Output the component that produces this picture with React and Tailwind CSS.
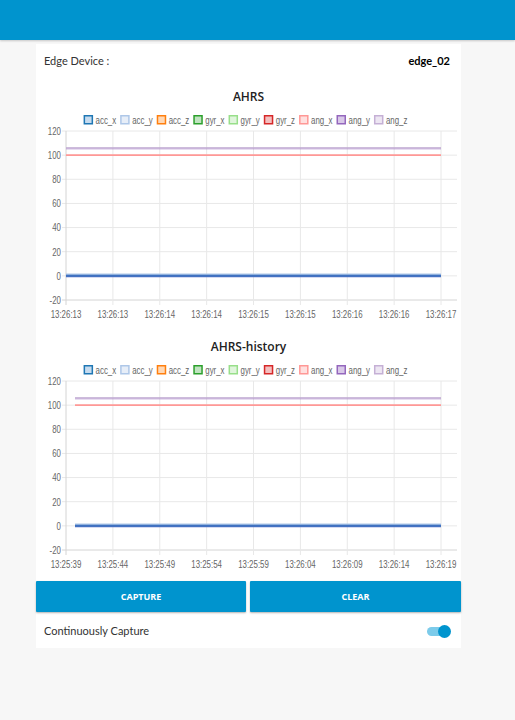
import React from "react";

const LEGEND = [
  ["acc_x", "#1f77b4", "#c6dbef"],
  ["acc_y", "#aec7e8", "#e7eef8"],
  ["acc_z", "#ff7f0e", "#ffd8b5"],
  ["gyr_x", "#2ca02c", "#c0e3c0"],
  ["gyr_y", "#98df8a", "#e0f5dc"],
  ["gyr_z", "#d62728", "#f3bfbf"],
  ["ang_x", "#ff9896", "#ffe0df"],
  ["ang_y", "#9467bd", "#d9c9e8"],
  ["ang_z", "#c5b0d5", "#ede6f2"],
];

const LABEL_FONT = '"Liberation Sans", Arial, sans-serif';
const FS = 10.5;
const SQUEEZE = 0.75;

const CW = { ":": 0.278, "-": 0.333, c: 0.5, y: 0.5, x: 0.5, z: 0.5, r: 0.333 };

function natWidth(s, fs) {
  let w = 0;
  for (const c of s) w += CW[c] ?? 0.556;
  return w * fs;
}

function Label({ x, y, anchor, children, fs = FS }) {
  const s = String(children);
  return (
    <text
      x={x}
      y={y}
      textAnchor={anchor}
      fontSize={fs}
      fill="#666"
      textLength={natWidth(s, fs) * SQUEEZE}
      lengthAdjust="spacingAndGlyphs"
      style={{ fontFamily: LABEL_FONT }}
    >
      {s}
    </text>
  );
}

function yv(v) {
  return 5 + ((120 - v) / 140) * 169;
}

function Legend() {
  let x = 0;
  const items = LEGEND.map(([name, border, fill]) => {
    const tw = natWidth(name, FS) * SQUEEZE;
    const it = { name, border, fill, x, tw };
    x += 9 + 3 + tw + 4;
    return it;
  });
  const total = x - 4;
  const start = (425 - total) / 2 - 3;
  return (
    <svg width="425" height="12" viewBox="0 0 425 12" className="block overflow-visible">
      {items.map((it) => (
        <g key={it.name}>
          <rect x={start + it.x + 0.75} y={1.75} width={8} height={8} fill={it.fill} stroke={it.border} strokeWidth="1.5" />
          <Label x={start + it.x + 12} y={9.5} anchor="start">
            {it.name}
          </Label>
        </g>
      ))}
    </svg>
  );
}

function Plot({ labels, x0 }) {
  const xs = Array.from({ length: 9 }, (_, i) => 30 + i * 46.875);
  const ys = [120, 100, 80, 60, 40, 20, 0, -20];
  return (
    <svg width="425" height="204" viewBox="0 0 425 204" className="block overflow-visible">
      {ys.map((v) => (
        <line key={"h" + v} x1="26" x2="421" y1={yv(v)} y2={yv(v)} stroke={v === -20 ? "#d4d4d4" : "#e8e8e8"} strokeWidth="1" />
      ))}
      {xs.map((x, i) => (
        <line key={"v" + i} x1={x} x2={x} y1="5" y2="179" stroke={i === 0 ? "#d4d4d4" : "#e8e8e8"} strokeWidth="1" />
      ))}
      {ys.map((v) => (
        <Label key={"yl" + v} x={25} y={yv(v) + 3.8} anchor="end">
          {v}
        </Label>
      ))}
      {labels.map((l, i) => (
        <Label key={"xl" + i} x={xs[i]} y={191.5} anchor="middle">
          {l}
        </Label>
      ))}
      <line x1={x0} x2="405" y1={yv(105.6)} y2={yv(105.6)} stroke="#9467bd" strokeWidth="2" strokeOpacity="0.45" />
      <line x1={x0} x2="405" y1={yv(105.6) - 0.5} y2={yv(105.6) - 0.5} stroke="#c5b0d5" strokeWidth="1.2" />
      <line x1={x0} x2="405" y1={yv(100)} y2={yv(100)} stroke="#ff9896" strokeWidth="1.6" />
      <line x1={x0} x2="405" y1={yv(0) - 1.5} y2={yv(0) - 1.5} stroke="#aec7e8" strokeWidth="1.5" />
      <line x1={x0} x2="405" y1={yv(0)} y2={yv(0)} stroke="#3f72c0" strokeWidth="2.2" />
      <line x1={x0} x2="405" y1={yv(0) + 1.2} y2={yv(0) + 1.2} stroke="#5b6fc9" strokeWidth="0.8" strokeOpacity="0.6" />
    </svg>
  );
}

function Chart({ title, labels, x0 }) {
  return (
    <div className="flex flex-col h-[250px]">
      <div className="h-[34px] flex items-center justify-center text-[12px] font-semibold text-[#222] font-['Open_Sans',sans-serif]">
        {title}
      </div>
      <Legend />
      <Plot labels={labels} x0={x0} />
    </div>
  );
}

export default function App() {
  return (
    <div className="min-h-screen w-full bg-[#f7f7f7] font-['Lato',sans-serif]">
      <div className="h-[40px] bg-[#0094ce] shadow-[0_1px_2px_rgba(0,0,0,0.2)]" />
      <div className="ml-[36px] mt-[4px] w-[425px] bg-white">
        <div className="h-[36px] flex items-center justify-between px-[8px] pb-[2px]">
          <span className="text-[11px] text-[#333]">Edge Device :</span>
          <span className="text-[11px] font-bold text-black mr-[3px]">edge_02</span>
        </div>
        <Chart
          title="AHRS"
          x0={30}
          labels={["13:26:13", "13:26:13", "13:26:14", "13:26:14", "13:26:15", "13:26:15", "13:26:16", "13:26:16", "13:26:17"]}
        />
        <Chart
          title="AHRS-history"
          x0={39}
          labels={["13:25:39", "13:25:44", "13:25:49", "13:25:54", "13:25:59", "13:26:04", "13:26:09", "13:26:14", "13:26:19"]}
        />
        <div className="mt-[1px] flex gap-[4px]">
          <button className="h-[31px] w-[210px] bg-[#0094ce] text-white text-[9px] font-bold font-['Open_Sans',sans-serif] shadow-[0_1px_2px_rgba(0,0,0,0.3)] rounded-[1px]">
            CAPTURE
          </button>
          <button className="h-[31px] flex-1 bg-[#0094ce] text-white text-[9px] font-bold font-['Open_Sans',sans-serif] shadow-[0_1px_2px_rgba(0,0,0,0.3)] rounded-[1px]">
            CLEAR
          </button>
        </div>
        <div className="h-[36px] flex items-center justify-between px-[8px] pt-[3px]">
          <span className="text-[11px] text-[#333]">Continuously Capture</span>
          <div className="relative w-[24px] h-[14px] mr-[2px] flex items-center">
            <div className="w-[20px] h-[9px] rounded-full bg-[#7ccbea]" />
            <div className="absolute right-0 top-[0.5px] w-[13px] h-[13px] rounded-full bg-[#0094ce]" />
          </div>
        </div>
      </div>
    </div>
  );
}
